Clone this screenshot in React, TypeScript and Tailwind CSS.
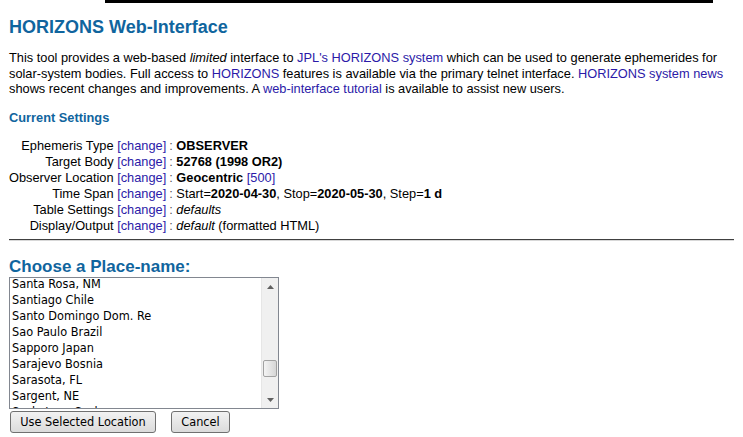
import React from "react";

const LINK = "text-[#2b1aa8]";
const HEAD = "text-[#10659e]";

const places = [
  "Santa Rosa, NM",
  "Santiago Chile",
  "Santo Domingo Dom. Re",
  "Sao Paulo Brazil",
  "Sapporo Japan",
  "Sarajevo Bosnia",
  "Sarasota, FL",
  "Sargent, NE",
  "Saskatoon Sask",
];

function Row({ label, children }: { label: string; children: React.ReactNode }) {
  return (
    <tr>
      <td className="text-right whitespace-nowrap p-0">
        {label} <span className={LINK}>[change]</span>
      </td>
      <td className="whitespace-nowrap p-0 pl-[3px]">
        <span className="text-[#555]">:</span> {children}
      </td>
    </tr>
  );
}

function Triangle({ up }: { up?: boolean }) {
  return (
    <svg width="7" height="4" viewBox="0 0 7 4" className="block">
      {up ? <path d="M0 4 L3.5 0 L7 4 Z" fill="#606060" /> : <path d="M0 0 L3.5 4 L7 0 Z" fill="#606060" />}
    </svg>
  );
}

export default function App() {
  return (
    <div className="bg-white min-h-[437px] text-black font-['Liberation_Sans',Arial,sans-serif] text-[12.8px] leading-[15.5px]">
      <div className="ml-[105px] w-[608px] h-[3px] bg-black" />
      <div className="px-[9px]">
        <h1 className={`${HEAD} font-bold text-[18px] leading-[22px] mt-[13px]`}>HORIZONS Web-Interface</h1>
        <p className="mt-[12px]">
          This tool provides a web-based <i>limited</i> interface to <span className={LINK}>JPL's HORIZONS system</span> which can be used to generate ephemerides for solar-system bodies. Full access to <span className={LINK}>HORIZONS</span> features is available via the primary telnet interface. <span className={LINK}>HORIZONS system news</span> shows recent changes and improvements. A <span className={LINK}>web-interface tutorial</span> is available to assist new users.
        </p>
        <h2 className={`${HEAD} font-bold text-[12.8px] mt-[13px]`}>Current Settings</h2>
        <table className="mt-[13px] border-collapse leading-[16px]">
          <tbody>
            <Row label="Ephemeris Type"><b>OBSERVER</b></Row>
            <Row label="Target Body"><b>52768 (1998 OR2)</b></Row>
            <Row label="Observer Location"><b>Geocentric</b> <span className={LINK}>[500]</span></Row>
            <Row label="Time Span">
              Start=<b>2020-04-30</b>, Stop=<b>2020-05-30</b>, Step=<b>1 d</b>
            </Row>
            <Row label="Table Settings"><i>defaults</i></Row>
            <Row label="Display/Output"><i>default</i> (formatted HTML)</Row>
          </tbody>
        </table>
      </div>
      <div className="mx-[9px] mt-[5px] h-[2px] border-t border-[#404040] border-b border-b-[#d8d8d8]" />
      <div className="px-[9px]">
        <h2 className={`${HEAD} font-bold text-[17px] leading-[20px] mt-[16px]`}>Choose a Place-name:</h2>
        <div className="flex w-[270px] h-[132px] border border-[#828790] bg-white font-['DejaVu_Sans_Condensed','DejaVu_Sans',sans-serif] text-[12.6px]">
          <div className="flex-1 overflow-hidden">
            <div className="-mt-[2px]">
              {places.map((p) => (
                <div key={p} className="h-[16px] leading-[16px] pl-[2px] whitespace-nowrap">
                  {p}
                </div>
              ))}
            </div>
          </div>
          <div className="w-[17px] bg-[#f0f0f0] border-l border-[#e6e6e6] flex flex-col items-center">
            <div className="h-[17px] flex items-center justify-center"><Triangle up /></div>
            <div className="flex-1 relative w-full">
              <div className="absolute left-[1px] right-[1px] top-[65px] h-[17px] rounded-[2px] border border-[#a2a2a2] bg-gradient-to-r from-[#f4f4f4] to-[#d6d6d6]" />
            </div>
            <div className="h-[17px] flex items-center justify-center"><Triangle /></div>
          </div>
        </div>
        <div className="flex gap-[15px] mt-[2px] ml-[1px] font-['DejaVu_Sans_Condensed','DejaVu_Sans',sans-serif] text-[12.6px]">
          <button className="h-[22px] w-[146px] rounded-[3px] border border-[#707070] bg-gradient-to-b from-[#f2f2f2] to-[#dbdbdb] text-black">
            Use Selected Location
          </button>
          <button className="h-[22px] w-[59px] rounded-[3px] border border-[#707070] bg-gradient-to-b from-[#f2f2f2] to-[#dbdbdb] text-black">
            Cancel
          </button>
        </div>
      </div>
    </div>
  );
}
